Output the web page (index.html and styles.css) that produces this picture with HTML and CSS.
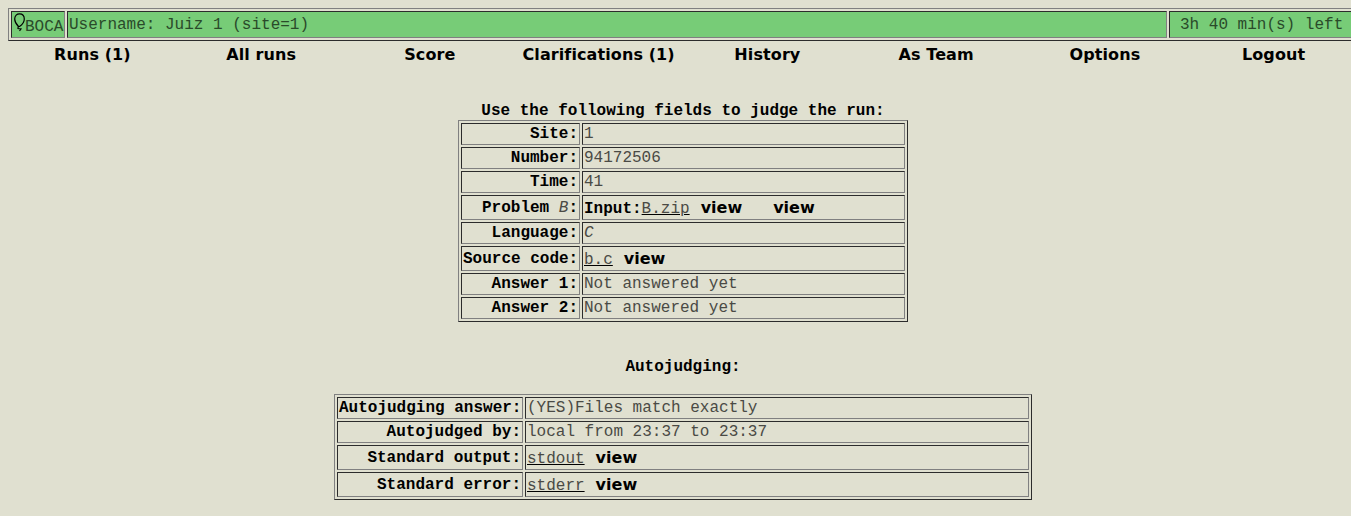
FILE: index.html
```html
<!DOCTYPE html>
<html lang="en">
<head>
<meta charset="utf-8">
<title>Judge's Page</title>
<link rel="stylesheet" href="styles.css">
</head>
<body>
<table class="box topbar">
<colgroup><col class="c-logo"><col class="c-user"><col class="c-clock"></colgroup>
<tr>
<td class="logo"><div class="brand"><svg class="balloon" width="12" height="19" viewBox="0 0 12 19" fill="none" stroke="#000" stroke-width="1.2"><path d="M4.500 13.500C2.500 11.500.700 9 .7 6 .7 2.500 3 .8 5.500 .8S10.300 2.500 10.300 6C10.300 9 8.500 11.500 5.500 13.500H4.200L4 15.500 7 16 5.500 18"/></svg><span>BOCA</span></div></td>
<td class="user">Username: Juiz 1 (site=1)</td>
<td class="clock">3h 40 min(s) left</td>
</tr>
</table>
<nav class="menu">
<a>Runs (1)</a><a>All runs</a><a>Score</a><a>Clarifications (1)</a><a>History</a><a>As Team</a><a>Options</a><a>Logout</a>
</nav>
<h2 class="heading judge">Use the following fields to judge the run:</h2>
<table class="box run">
<colgroup><col class="c-name"><col class="c-value"></colgroup>
<tr><th>Site:</th><td>1</td></tr>
<tr><th>Number:</th><td>94172506</td></tr>
<tr><th>Time:</th><td>41</td></tr>
<tr class="tall"><th>Problem <i>B</i>:</th><td><b>Input:</b><a class="file">B.zip</a><a class="view">view</a><a class="view second">view</a></td></tr>
<tr><th>Language:</th><td><i>C</i></td></tr>
<tr class="tall"><th>Source code:</th><td><a class="file">b.c</a><a class="view">view</a></td></tr>
<tr><th>Answer 1:</th><td>Not answered yet</td></tr>
<tr><th>Answer 2:</th><td>Not answered yet</td></tr>
</table>
<h2 class="heading auto">Autojudging:</h2>
<table class="box autojudge">
<colgroup><col class="c-name"><col class="c-value"></colgroup>
<tr><th>Autojudging answer:</th><td>(YES)Files match exactly</td></tr>
<tr><th>Autojudged by:</th><td>local from 23:37 to 23:37</td></tr>
<tr class="tall"><th>Standard output:</th><td><a class="file">stdout</a><a class="view">view</a></td></tr>
<tr class="tall"><th>Standard error:</th><td><a class="file">stderr</a><a class="view">view</a></td></tr>
</table>
</body>
</html>
```
FILE: styles.css
```css
html { overflow: hidden; background: #e0e0d0; }
body {
  width: 1350px;
  margin: 8px;
  font: 16px/18px "Liberation Mono", monospace;
  color: #000;
}
.box {
  table-layout: fixed;
  border-collapse: separate;
  border-spacing: 2px;
  border: 1px solid;
  border-color: #808080 #2c2c2c #2c2c2c #808080;
}
.box th, .box td {
  box-sizing: border-box;
  height: 22px;
  padding: 0 1px;
  border: 1px solid;
  border-color: #2c2c2c #808080 #808080 #2c2c2c;
  line-height: 20px;
  white-space: nowrap;
  vertical-align: middle;
}
.box th { text-align: right; font-weight: bold; }
.box th i { font-weight: normal; }
.box td, .box i { color: #4a4a45; }
.box td b { color: #000; }
.box .tall th, .box .tall td { height: 25px; line-height: 22px; }
.box .tall td { line-height: 20px; padding-top: 3px; }
.topbar { width: 1350px; }
.topbar td { height: 27px; background: #77cc77; color: #2a4a2a; line-height: 24px; }
.c-logo { width: 54px; }
.c-user { width: 1100px; }
.brand { display: flex; height: 25px; }
.brand span { line-height: 30px; height: 25px; margin-left: -1px; }
.topbar .clock { padding-left: 10px; }
.balloon { margin-top: 1px; margin-left: 1px; flex: none; }
.menu {
  display: grid;
  grid-template-columns: repeat(8, 1fr);
  height: 27px;
  line-height: 27px;
  text-align: center;
}
.menu a, .view { font-family: "DejaVu Sans", sans-serif; font-weight: bold; font-size: 16px; color: #000; }
.menu a { letter-spacing: 0.1px; }
.view { margin-left: 11px; line-height: 18px; }
.view.second { margin-left: 31px; }
.file { text-decoration: underline #000; }
.heading { margin: 0; font-size: 16px; line-height: 18px; text-align: center; }
.judge { padding: 34px 0 0; }
.auto { padding: 36px 0 18px; }
.run { width: 450px; margin: 0 auto; }
.run .c-name { width: 119px; }
.autojudge { width: 698px; margin: 0 auto; }
.autojudge .c-name { width: 186px; }
```
